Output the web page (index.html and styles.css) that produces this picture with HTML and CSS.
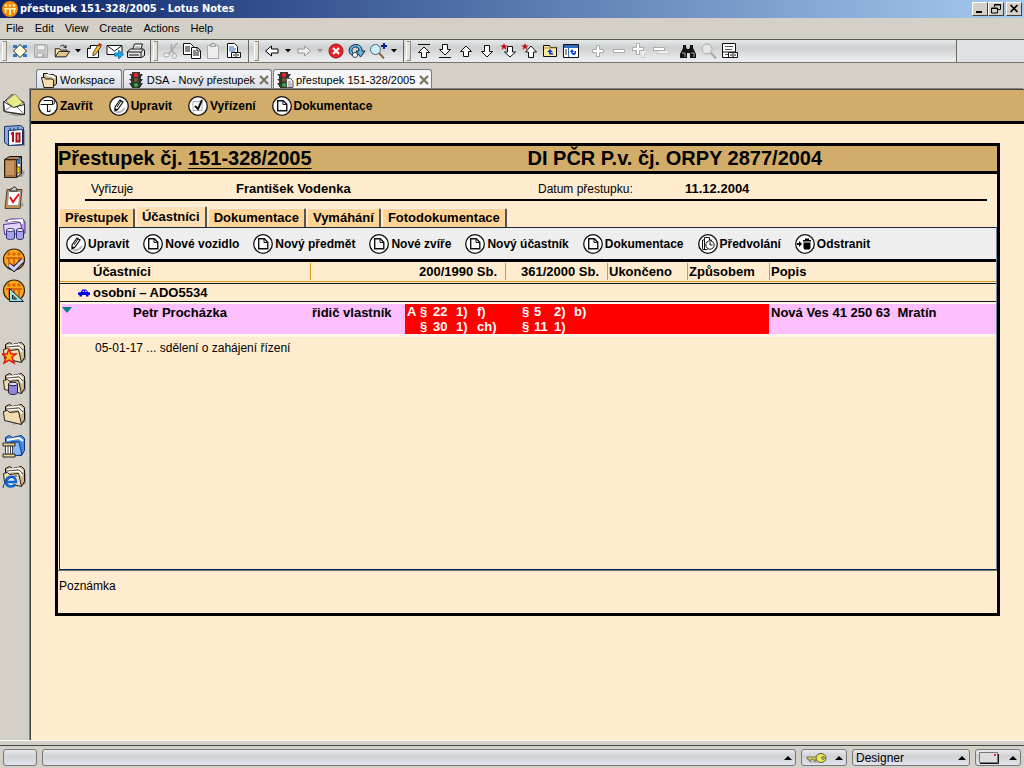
FILE: index.html
```html
<!DOCTYPE html>
<html lang="cs">
<head>
<meta charset="utf-8">
<title>přestupek 151-328/2005 - Lotus Notes</title>
<link rel="stylesheet" href="styles.css">
</head>
<body>
<svg class="sprite" aria-hidden="true">
  <defs>
    <symbol id="logo" viewBox="0 0 16 16"><circle cx="8" cy="8" r="8" fill="#f58a08"/><g fill="#fff0a0"><circle cx="4" cy="4.500" r="1.300"/><circle cx="8" cy="4.500" r="1.300"/><circle cx="12" cy="4.500" r="1.300"/><path d="M2 7h12v1.500h-1V12h-1.500V8.500H9V14H7V8.500H4.500V12H3V8.500H2z"/></g></symbol>
    <symbol id="diamond" viewBox="0 0 16 16"><path d="M1 2h4v3H1zM11 2h4v3h-4zM1 11h4v3H1zM11 11h4v3h-4z" fill="#2b7bd0"/><path d="M8 1.500l6.500 6.500L8 14.500 1.500 8z" fill="#fffbd8" stroke="#222"/></symbol>
    <symbol id="save" viewBox="0 0 16 16"><path d="M1.500 1.500h12l1 1v12h-13z" fill="#ccc" stroke="#aaa"/><path d="M4 2h8v5H4zM4 10h8v4H4z" fill="#eee" stroke="#aaa"/><path d="M9 11h2v3H9z" fill="#aaa"/></symbol>
    <symbol id="open" viewBox="0 0 20 16"><path d="M2.500 14V5.500h5l1 1.500h7v2" fill="#ffe9b0" stroke="#111"/><path d="M2.500 14.500l4-6h12l-4 6z" fill="#e3c58b" stroke="#111"/><path d="M8 3c2-2 5-2 6 1M11.500 3.500l3 1V1.500" fill="none" stroke="#111"/></symbol>
    <symbol id="caret" viewBox="0 0 8 8"><path d="M1 2h6L4 5.500z" fill="currentColor"/></symbol>
    <symbol id="edit" viewBox="0 0 16 16"><path d="M4.500 2.500h8v12h-11v-9z" fill="#fff" stroke="#111"/><path d="M1.500 5.500h3v-3" fill="#ddd" stroke="#111"/><path d="M7 10l5-8 3 1.500-5 7.500-3 2z" fill="#f3c61b" stroke="#222" stroke-width=".8"/><path d="M12 2l1-2 3 1.500-1 2z" fill="#d21"/></symbol>
    <symbol id="mail" viewBox="0 0 17 16"><path d="M.5 2.500h15v9H.5z" fill="#fff" stroke="#111"/><path d="M1 3l7 5 7-5" fill="none" stroke="#111"/><path d="M8 10h4V7l5 4.500L12 16v-3H8z" fill="#18a6e6" stroke="#0863a5" stroke-width=".7"/></symbol>
    <symbol id="print" viewBox="0 0 18 16"><path d="M5.500 7l2-6h8l-2 6" fill="#fff" stroke="#111"/><path d="M8 4h5" stroke="#777"/><path d="M.5 8.500l3-2.500h13l1 1.500v5l-3 2H.5z" fill="#e5e5e5" stroke="#111"/><path d="M.5 9h13l3-2M14 9v5M2 12h10" stroke="#111" fill="none"/></symbol>
    <symbol id="cut" viewBox="0 0 17 16"><path d="M15 0L6 11M9 1v6l4 5" stroke="#aaa" stroke-width="1.600" fill="none"/><ellipse cx="4" cy="12" rx="3" ry="2" fill="#eee" stroke="#aaa"/><ellipse cx="12" cy="13" rx="2" ry="2.500" fill="#eee" stroke="#aaa"/></symbol>
    <symbol id="copy" viewBox="0 0 18 16"><path d="M.5.5h7l3 3v8H.5z" fill="#fff" stroke="#111"/><path d="M2 4h5M2 6h5M2 8h5" stroke="#111"/><path d="M8.500 4.500h6l3 3v8h-9z" fill="#fff" stroke="#111"/><path d="M14 5v3h3M10 8h3M10 10h6M10 12h6" stroke="#111" fill="none"/></symbol>
    <symbol id="paste" viewBox="0 0 14 16"><path d="M1.500 2.500h11v13h-11z" fill="#eee" stroke="#aaa"/><path d="M4.500 3.500v-2h1v-1h3v1h1v2z" fill="#ddd" stroke="#999"/></symbol>
    <symbol id="doclink" viewBox="0 0 16 16"><path d="M1.500.5h7l3 3v11h-10z" fill="#fff" stroke="#111"/><path d="M3 4h5M3 6h7M3 8h6" stroke="#26b" /><path d="M5.500 9.500h9v5h-9z" fill="#fff" stroke="#111"/><path d="M7 12h6M10 9v2M10 13v2" stroke="#111"/></symbol>
    <symbol id="back" viewBox="0 0 16 16"><path d="M1.500 8l6-5v3h6.500v4H7.500v3z" fill="#fff" stroke="currentColor"/></symbol>
    <symbol id="fwd" viewBox="0 0 16 16"><path d="M14.500 8l-6-5v3H2v4h6.500v3z" fill="#eee" stroke="currentColor"/></symbol>
    <symbol id="stop" viewBox="0 0 16 16"><circle cx="8" cy="8" r="7" fill="#e5222a" stroke="#a30c12"/><path d="M5 5l6 6M11 5l-6 6" stroke="#fff" stroke-width="2.200"/></symbol>
    <symbol id="refresh" viewBox="0 0 18 16"><path d="M5 12.500C-1 11 0 2 7.500 1.500 12 1.500 14 4 14 8h3l-4.500 6L8 8h3c0-3-1.500-4-3.500-4C4 4 3 8 5 10z" fill="#62b8e8" stroke="#123"/><circle cx="7" cy="12" r="2.500" fill="#fff" stroke="#345"/></symbol>
    <symbol id="zoomplus" viewBox="0 0 18 16"><circle cx="6.500" cy="6.500" r="5" fill="#c9eef5" stroke="#567"/><path d="M10 10l5 5.500" stroke="#876737" stroke-width="2"/><path d="M12 3h6M15 0v6" stroke="#001a8c" stroke-width="1.800"/></symbol>
    <symbol id="up" viewBox="0 0 14 16"><path d="M7 3L1.500 8.500h3v5h5v-5h3z" fill="#fff" stroke="#111"/></symbol>
    <symbol id="down" viewBox="0 0 14 16"><path d="M7 14L1.500 8.500h3v-6h5v6h3z" fill="#fff" stroke="#111"/></symbol>
    <symbol id="top" viewBox="0 0 14 16"><path d="M1 1.500h12" stroke="#111"/><path d="M7 4L1.500 9.500h3v5h5v-5h3z" fill="#fff" stroke="#111"/></symbol>
    <symbol id="bottom" viewBox="0 0 14 16"><path d="M1 14.500h12" stroke="#111"/><path d="M7 12L1.500 6.500h3v-5h5v5h3z" fill="#fff" stroke="#111"/></symbol>
    <symbol id="stardown" viewBox="0 0 16 16"><path d="M10 14L4.500 9h3V3.500h5V9h3z" fill="#fff" stroke="#111"/><path d="M4 0l1 2.500h3L5.500 4l1 3L4 5 1.500 7l1-3L0 2.500h3z" fill="#c1080c"/></symbol>
    <symbol id="starup" viewBox="0 0 16 16"><path d="M10 3L4.500 9h3v5.500h5V9h3z" fill="#fff" stroke="#111"/><path d="M4 0l1 2.500h3L5.500 4l1 3L4 5 1.500 7l1-3L0 2.500h3z" fill="#c1080c"/></symbol>
    <symbol id="folderup" viewBox="0 0 16 16"><path d="M1.500 13.500v-11h6l1 2h6v9z" fill="#ffe9a3" stroke="#111"/><path d="M2 5h12" stroke="#b98d2a"/><path d="M8 6L5 9h2v2.500h4v-1.500H9V9h2z" fill="#0a3fd0"/></symbol>
    <symbol id="winup" viewBox="0 0 16 16"><path d="M.5 1.500h15v13H.5z" fill="#fff" stroke="#111"/><path d="M1 2h14v3H1z" fill="#2c6cb8"/><path d="M5.500 5v9" stroke="#2c6cb8"/><path d="M2 7h2M2 9h2M2 11h2" stroke="#333"/><path d="M9 6L7 9h1c0 3 5 5 5 0V8h-1.500v1c0 2-2 1-2 0H11z" fill="#0a3fd0"/></symbol>
    <symbol id="plus" viewBox="0 0 14 16"><path d="M5.500 2.500h3v4h4v3h-4v4h-3v-4h-4v-3h4z" fill="#fff" stroke="#aaa"/></symbol>
    <symbol id="minus" viewBox="0 0 14 16"><path d="M1.500 6.500h11v3h-11z" fill="#fff" stroke="#aaa"/></symbol>
    <symbol id="plusall" viewBox="0 0 16 16"><path d="M8 7.500h6.500v3h-2v4h-3v-3" fill="#eee" stroke="#ccc"/><path d="M4.500.5h3v4h4v3h-4v4h-3v-4h-4v-3h4z" fill="#fff" stroke="#aaa"/></symbol>
    <symbol id="minusall" viewBox="0 0 16 16"><path d="M4.500 7.500h11v3h-11z" fill="#eee" stroke="#ccc"/><path d="M.5 4.500h11v3H.5z" fill="#fff" stroke="#aaa"/></symbol>
    <symbol id="binoc" viewBox="0 0 16 16"><path d="M3 2h3v2l1 2h2l1-2V2h3v3l3 6v4h-6v-5H7v5H0v-4l3-6z" fill="#111"/><path d="M2 10h3v4M11 10h3v4" stroke="#aaa" fill="none"/></symbol>
    <symbol id="magn" viewBox="0 0 16 16"><circle cx="6" cy="6" r="5" fill="#e6e6e6" stroke="#aaa"/><path d="M10 10l5 5.500" stroke="#aaa" stroke-width="2"/></symbol>
    <symbol id="props" viewBox="0 0 16 16"><path d="M.5.5h13v14H.5z" fill="#fff" stroke="#111"/><path d="M3 3.500h8M3 6.500h7" stroke="#555"/><path d="M1 9h12" stroke="#111"/><path d="M3 11.500h3" stroke="#555"/><path d="M6.500 9.500h9v5h-9z" fill="#fff" stroke="#111"/><path d="M8 12h6M11 9v2M11 13v2" stroke="#111"/></symbol>
    <symbol id="folders" viewBox="0 0 16 16"><path d="M2.500 6V1.500h4l1 1h5l1 1.500h2v8l-3 2" fill="#c9b387" stroke="#111"/><path d="M5 3l6 1 3 2" stroke="#fff" stroke-width="2" fill="none"/><path d="M.5 5.500h3l1 1.500h6l2 1v7.500H3z" fill="#f6dfaa" stroke="#222"/></symbol>
    <symbol id="light" viewBox="0 0 14 16"><path d="M0 2h3v1h8V2h3l-2 3v2h2l-2 3v1h2l-2 3v1H2v-1l-2-3h2V9L0 7h2V4z" fill="#333"/><path d="M3 0h8v16H3z" fill="#333"/><circle cx="7" cy="3" r="2.200" fill="#e22"/><circle cx="7" cy="8" r="2" fill="#765c28"/><circle cx="7" cy="13" r="2" fill="#2bb14b"/></symbol>
    <symbol id="lightdoc" viewBox="0 0 17 16"><use href="#light" width="14" height="16"/><path d="M9.500 6.500h4l2.500 2.500v6.500H9.500z" fill="#f5f5f5" stroke="#555"/><path d="M11 10h3M11 12h4M11 14h4" stroke="#888"/></symbol>
    <symbol id="x" viewBox="0 0 10 10"><path d="M1 1l8 8M9 1l-8 8" stroke="#786f5e" stroke-width="2"/></symbol>

    <symbol id="ring" viewBox="0 0 20 20"><circle cx="10" cy="10" r="9.300" fill="#fff" stroke="#111" stroke-width="1.300"/></symbol>
    <symbol id="a-close" viewBox="0 0 20 20"><use href="#ring"/><path d="M5.500 4.500h9v4h-12M9.500 9v7M9.500 15.500h2.500v-2M14.500 8.500c2 0 2-2 1.500-4" fill="none" stroke="#111"/></symbol>
    <symbol id="a-edit" viewBox="0 0 20 20"><use href="#ring"/><path d="M7 16c3 1 7-1 9-4" stroke="#bbb" stroke-width="2" fill="none"/><path d="M6 11l5-7 3 2-5 7-3 2z" fill="#fff" stroke="#111" stroke-width="1.200"/><path d="M8 11l4-6" stroke="#111"/><path d="M6 12v3l3-1z"/></symbol>
    <symbol id="a-check" viewBox="0 0 20 20"><use href="#ring"/><path d="M5 5.500h9v9H5z" fill="#fff" stroke="#aaa"/><path d="M7 10l3 3 4-9" stroke="#111" stroke-width="2" fill="none"/></symbol>
    <symbol id="a-doc" viewBox="0 0 20 20"><use href="#ring"/><path d="M5.700 4.700h5.600l3.500 3.600v6.500H5.700z" fill="#fff" stroke="#111" stroke-width="1.400"/><path d="M11 5v3.500h3.500" fill="none" stroke="#111"/></symbol>
    <symbol id="a-clock" viewBox="0 0 20 20"><use href="#ring"/><path d="M4.500 15V6h2V3.500h5V6h2v2M6.500 6v10M4.500 15.500h5" fill="none" stroke="#111"/><circle cx="12" cy="11" r="4.200" fill="#fff" stroke="#111"/><path d="M12 8v3h2.500" fill="none" stroke="#111"/></symbol>
    <symbol id="a-del" viewBox="0 0 20 20"><use href="#ring"/><path d="M2 10h4" stroke="#111" stroke-width="2"/><path d="M4 7l3 3-3 3z"/><path d="M8 6h8v1.500H8zM10 4.500h4V6h-4zM8.500 8.500h7V14l-1 1.500h-5l-1-1.500z"/></symbol>

    <symbol id="s-mail" viewBox="0 0 24 24"><path d="M5 21l18-2v3l-8 1z" fill="#999"/><path d="M1.500 9.500L10 1.500l12 8v12l-20-3z" fill="#fff" stroke="#111"/><path d="M4 8l9-7 8 9-9 5z" fill="#eaea88" stroke="#886"/><path d="M1.500 8.500l10 6 11-3v10l-20-3z" fill="#fff" stroke="#222"/><path d="M2.500 18l7-5M22 21l-7-7" stroke="#777"/></symbol>
    <symbol id="s-cal" viewBox="0 0 24 24"><path d="M6 22h17V6h-2z" fill="#999"/><path d="M2.500 2.500l16-1 3 2v17l-15 1-4-3z" fill="#8fa8d6" stroke="#14366c"/><path d="M6.500 6.500l14-1v15l-14 1z" fill="#fff" stroke="#14366c"/><path d="M8 4v3M12 4v3M16 3v3" stroke="#14366c"/><path d="M9 10l2-1v9M14.500 9.500h3v8h-3z" fill="none" stroke="#a50f16" stroke-width="2"/></symbol>
    <symbol id="s-book" viewBox="0 0 24 24"><path d="M8 22h12l3-5-4-3z" fill="#999"/><path d="M2.500 4.500l5-3h12v17l-5 4h-12z" fill="#b7824d" stroke="#111"/><path d="M15 5l4-3v17l-4 3z" fill="#fff" stroke="#111"/><path d="M16 3h2v6h-2z" fill="#27c"/><path d="M2.500 4.500h12v18h-12z" fill="#a8703c" stroke="#35200c"/><path d="M4 6h8v14H4z" fill="#c59462"/><path d="M15 12h3v6h-3z" fill="#f3cc18" stroke="#653"/></symbol>
    <symbol id="s-task" viewBox="0 0 24 24"><path d="M18 22l4-3-2-3z" fill="#999"/><path d="M5 3.500h15l-2 19H3z" fill="#c88e57" stroke="#543"/><path d="M6.500 5.500h12l-2 14h-11z" fill="#fff" stroke="#998"/><path d="M8 5V3h2l2-2.500L15 3v2z" fill="#ccc" stroke="#222"/><path d="M8 11l3 5 6-8" stroke="#df1718" stroke-width="2" fill="none"/></symbol>
    <symbol id="s-rep" viewBox="0 0 24 24"><path d="M3 4l6-2h12l2 3v11l-5 3" fill="#bca1e6" stroke="#52308e"/><path d="M6 4l14-1v4M2 8l18-3" stroke="#fff" stroke-width="2"/><path d="M1.500 7.500l17-2 2 11-18 1z" fill="#e4d5ff" stroke="#52308e"/><path d="M4.500 13v8c1 2 7 2 8 0v-8zM14.500 13v8c1 2 6 2 7 0v-8z" fill="#a6a4e8" stroke="#303070"/><ellipse cx="8.500" cy="13" rx="4" ry="1.500" fill="#fff" stroke="#303070"/><ellipse cx="18" cy="13" rx="3.500" ry="1.500" fill="#fff" stroke="#303070"/></symbol>
    <symbol id="s-orb" viewBox="0 0 24 24"><circle cx="12" cy="11.500" r="10.500" fill="#fca71c" stroke="#3a2608" stroke-width="1.200"/><g fill="#d9640c"><circle cx="7" cy="6" r="1.700"/><circle cx="12" cy="6" r="1.700"/><circle cx="17" cy="6" r="1.700"/><path d="M4 9h16v2h-2v7h-2v-7h-3v9h-2v-9H8v7H6v-7H4z"/></g></symbol>
    <symbol id="s-orbcheck" viewBox="0 0 24 24"><use href="#s-orb"/><path d="M7 17l5 4 9-9" stroke="#223" stroke-width="5" fill="none"/><path d="M7 17l5 4 9-9" stroke="#cfd3f5" stroke-width="3" fill="none"/></symbol>
    <symbol id="s-orbtri" viewBox="0 0 24 24"><use href="#s-orb"/><path d="M7.500 9.500l14 13h-14z" fill="#9be3d8" stroke="#124"/><path d="M10.500 16l4 4h-4z" fill="#e97b12" stroke="#124"/></symbol>
    <symbol id="s-folder" viewBox="0 0 24 24"><path d="M10 22l14-3V8z" fill="#999"/><path d="M3.500 8V3.500l4-2 3 2 9-2 3 3v12l-3 5" fill="#cdb98c" stroke="#111"/><path d="M5 5l12-2 4 4M5 7l12-1 3 5" stroke="#fff" stroke-width="1.600" fill="none"/><path d="M4 6l13-1 4 4" stroke="#333" stroke-width=".8" fill="none"/><path d="M1.500 8.500l4-1 2 2 9-1 3 13-17-4z" fill="#f2ddb0" stroke="#222"/></symbol>
    <symbol id="s-star" viewBox="0 0 24 24"><use href="#s-folder"/><path d="M7 8l2 5h5l-4 3 2 6-5-3-5 3 2-6-4-3h5z" fill="#fdb713" stroke="#e21b12" stroke-width="1.500"/></symbol>
    <symbol id="s-db" viewBox="0 0 24 24"><use href="#s-folder"/><path d="M6.500 12v9c2 2 7 2 9 0v-9z" fill="#8f85da" stroke="#223"/><ellipse cx="11" cy="12" rx="4.500" ry="1.800" fill="#dcd8ff" stroke="#223"/></symbol>
    <symbol id="s-lib" viewBox="0 0 24 24"><path d="M3.500 8V3.500l4-2 3 2 9-2 3 3v12l-3 5H9" fill="#4a8ae6" stroke="#08337e"/><path d="M5 6l12-2 4 3" stroke="#fff" stroke-width="2" fill="none"/><path d="M9 8h8l3 13-10 1z" fill="#83b8fa" stroke="#08337e"/><path d="M1 9h12v3H1zM1 20h12v3H1z" fill="#f0dc91" stroke="#222"/><path d="M3.500 12h7v8h-7zM6 12v8M8.500 12v8" fill="#fff" stroke="#444"/></symbol>
    <symbol id="s-ie" viewBox="0 0 24 24"><use href="#s-folder"/><path d="M4 17h10c0-7-10-7-10 0 0 5 7 6 9 2" fill="#d8ecff" stroke="#1267ce" stroke-width="2.600"/><path d="M1 23c0-5 8-13 14-12" stroke="#0a3d98" fill="none"/></symbol>
    <symbol id="car" viewBox="0 0 12 8"><path d="M0 3.500L3 3l1-2.500h4L10 3l2 .5V6h-1.500v1.500H8V6H4v1.500H1.500V6H0z" fill="#0000e8"/><path d="M4.500 3l.5-1.500h1V3M7 1.500h.8L9 3H7z" fill="#bcd"/></symbol>
    <symbol id="key" viewBox="0 0 22 12"><path d="M2 5h12v2h-3v2H9V7H6v2H4V7H2z" fill="#e8e05a" stroke="#554" stroke-width=".8"/><ellipse cx="16" cy="6" rx="5" ry="4.500" fill="#f1e74f" stroke="#554"/><circle cx="18" cy="6" r="1.300" fill="#fff" stroke="#554"/><path d="M4 10h11" stroke="#999"/></symbol>
    <symbol id="env" viewBox="0 0 20 12"><path d="M.5.5h18v10H.5z" fill="#ddd" stroke="#777"/><path d="M1 11.500h18.500V2" stroke="#111" fill="none"/><path d="M15 2h2v2h-2z" fill="#f16"/></symbol>
    <symbol id="tri" viewBox="0 0 8 8"><path d="M0 6l4-4 4 4z"/></symbol>
  </defs>
</svg>

<header class="titlebar">
  <svg class="ic16"><use href="#logo"/></svg>
  <h1 class="titlebar-text">přestupek 151-328/2005 - Lotus Notes</h1>
  <div class="win-buttons">
    <button class="win-btn" aria-label="Minimize"><svg viewBox="0 0 12 10"><path d="M2 7h6v2H2z"/></svg></button>
    <button class="win-btn" aria-label="Restore"><svg viewBox="0 0 12 10"><path d="M4.500 3V.5h6v5H8M4 1h7M1.500 4h6v5h-6zM1 4.500h7" fill="none" stroke="#000"/></svg></button>
    <button class="win-btn win-close" aria-label="Close"><svg viewBox="0 0 12 10"><path d="M2.500 1l7 7M9.500 1l-7 7" stroke="#000" stroke-width="1.700"/></svg></button>
  </div>
</header>

<nav class="menubar">
  <button>File</button><button>Edit</button><button>View</button><button>Create</button><button>Actions</button><button>Help</button>
</nav>

<div class="toolbar">
  <div class="tool-group">
    <button class="tool" aria-label="Properties"><svg><use href="#diamond"/></svg></button>
    <button class="tool" aria-label="Save"><svg><use href="#save"/></svg></button>
    <button class="tool" aria-label="Open"><svg class="wide"><use href="#open"/></svg></button>
    <button class="tool caret" aria-label="Open menu"><svg><use href="#caret"/></svg></button>
    <button class="tool" aria-label="Edit document"><svg><use href="#edit"/></svg></button>
    <button class="tool" aria-label="Send"><svg class="wide"><use href="#mail"/></svg></button>
    <button class="tool" aria-label="Print"><svg class="wide"><use href="#print"/></svg></button>
  </div>
  <div class="tool-group">
    <button class="tool" aria-label="Cut"><svg class="wide"><use href="#cut"/></svg></button>
    <button class="tool" aria-label="Copy"><svg class="wide"><use href="#copy"/></svg></button>
    <button class="tool" aria-label="Paste"><svg><use href="#paste"/></svg></button>
    <button class="tool" aria-label="Copy as link"><svg><use href="#doclink"/></svg></button>
  </div>
  <div class="tool-group spaced">
    <button class="tool" aria-label="Back"><svg><use href="#back"/></svg></button>
    <button class="tool caret" aria-label="Back list"><svg><use href="#caret"/></svg></button>
    <button class="tool dim" aria-label="Forward"><svg><use href="#fwd"/></svg></button>
    <button class="tool caret dim" aria-label="Forward list"><svg><use href="#caret"/></svg></button>
    <button class="tool" aria-label="Stop"><svg><use href="#stop"/></svg></button>
    <button class="tool" aria-label="Refresh"><svg class="wide"><use href="#refresh"/></svg></button>
    <button class="tool" aria-label="Search"><svg class="wide"><use href="#zoomplus"/></svg></button>
    <button class="tool caret" aria-label="Search menu"><svg><use href="#caret"/></svg></button>
  </div>
  <div class="tool-group grow">
    <button class="tool" aria-label="First"><svg><use href="#top"/></svg></button>
    <button class="tool" aria-label="Last"><svg><use href="#bottom"/></svg></button>
    <button class="tool" aria-label="Previous"><svg><use href="#up"/></svg></button>
    <button class="tool" aria-label="Next"><svg><use href="#down"/></svg></button>
    <button class="tool" aria-label="Next unread"><svg><use href="#stardown"/></svg></button>
    <button class="tool" aria-label="Previous unread"><svg><use href="#starup"/></svg></button>
    <button class="tool" aria-label="Parent folder"><svg><use href="#folderup"/></svg></button>
    <button class="tool" aria-label="Parent view"><svg><use href="#winup"/></svg></button>
    <button class="tool lead" aria-label="Expand"><svg><use href="#plus"/></svg></button>
    <button class="tool" aria-label="Collapse"><svg><use href="#minus"/></svg></button>
    <button class="tool" aria-label="Expand all"><svg><use href="#plusall"/></svg></button>
    <button class="tool" aria-label="Collapse all"><svg><use href="#minusall"/></svg></button>
    <button class="tool lead" aria-label="Find"><svg><use href="#binoc"/></svg></button>
    <button class="tool" aria-label="Find next"><svg><use href="#magn"/></svg></button>
    <button class="tool" aria-label="Field properties"><svg><use href="#props"/></svg></button>
  </div>
  <div class="tool-rest"></div>
</div>

<div class="window-tabs">
  <div class="wtab"><svg class="ic16"><use href="#folders"/></svg><span>Workspace</span></div>
  <div class="wtab closable"><svg class="ic16"><use href="#light"/></svg><span>DSA - Nový přestupek</span><button class="tab-close" aria-label="Close tab"><svg><use href="#x"/></svg></button></div>
  <div class="wtab closable current"><svg class="ic16"><use href="#lightdoc"/></svg><span>přestupek 151-328/2005</span><button class="tab-close" aria-label="Close tab"><svg><use href="#x"/></svg></button></div>
</div>

<div class="workarea">
  <nav class="bookmarks">
    <button aria-label="Mail"><svg><use href="#s-mail"/></svg></button>
    <button aria-label="Calendar"><svg><use href="#s-cal"/></svg></button>
    <button aria-label="Address book"><svg><use href="#s-book"/></svg></button>
    <button aria-label="To do"><svg><use href="#s-task"/></svg></button>
    <button aria-label="Replication"><svg><use href="#s-rep"/></svg></button>
    <button aria-label="Administrator"><svg><use href="#s-orbcheck"/></svg></button>
    <button aria-label="Designer"><svg><use href="#s-orbtri"/></svg></button>
    <button class="second" aria-label="Favorites"><svg><use href="#s-star"/></svg></button>
    <button aria-label="Databases"><svg><use href="#s-db"/></svg></button>
    <button aria-label="More bookmarks"><svg><use href="#s-folder"/></svg></button>
    <button aria-label="History"><svg><use href="#s-lib"/></svg></button>
    <button aria-label="Internet"><svg><use href="#s-ie"/></svg></button>
  </nav>

  <main class="document">
    <div class="actions page-actions">
      <button class="action"><svg><use href="#a-close"/></svg>Zavřít</button>
      <button class="action"><svg><use href="#a-edit"/></svg>Upravit</button>
      <button class="action"><svg><use href="#a-check"/></svg>Vyřízení</button>
      <button class="action"><svg><use href="#a-doc"/></svg>Dokumentace</button>
    </div>

    <section class="form">
      <div class="form-title">
        <h2>Přestupek čj. <u>151-328/2005</u></h2>
        <h2>DI PČR P.v. čj. ORPY 2877/2004</h2>
      </div>
      <dl class="facts">
        <dt>Vyřizuje</dt><dd>František Vodenka</dd>
        <dt>Datum přestupku:</dt><dd>11.12.2004</dd>
      </dl>
      <div class="form-tabs" role="tablist">
        <button role="tab">Přestupek</button>
        <button role="tab" aria-selected="true" class="current">Účastníci</button>
        <button role="tab">Dokumentace</button>
        <button role="tab">Vymáhání</button>
        <button role="tab">Fotodokumentace</button>
      </div>
      <div class="panel">
        <div class="actions panel-actions">
          <button class="action"><svg><use href="#a-edit"/></svg>Upravit</button>
          <button class="action"><svg><use href="#a-doc"/></svg>Nové vozidlo</button>
          <button class="action"><svg><use href="#a-doc"/></svg>Nový předmět</button>
          <button class="action"><svg><use href="#a-doc"/></svg>Nové zvíře</button>
          <button class="action"><svg><use href="#a-doc"/></svg>Nový účastník</button>
          <button class="action"><svg><use href="#a-doc"/></svg>Dokumentace</button>
          <button class="action"><svg><use href="#a-clock"/></svg>Předvolání</button>
          <button class="action"><svg><use href="#a-del"/></svg>Odstranit</button>
        </div>
        <table class="people">
          <colgroup><col class="c-name"><col class="c-role"><col class="c-law1"><col class="c-law2"><col class="c-end"><col class="c-way"><col></colgroup>
          <thead>
            <tr>
              <th class="first"><span>Účastníci</span></th>
              <th class="num" colspan="2"><span>200/1990 Sb.</span></th>
              <th class="num"><span>361/2000 Sb.</span></th>
              <th><span>Ukončeno</span></th>
              <th><span>Způsobem</span></th>
              <th><span>Popis</span></th>
            </tr>
          </thead>
          <tbody>
            <tr class="category"><td colspan="7"><div class="category-cell"><svg class="car"><use href="#car"/></svg>osobní – ADO5534</div></td></tr>
            <tr class="person">
              <td><div class="person-name"><svg class="twisty" viewBox="0 0 10 6"><path d="M0 0h10L5 6z" fill="#008080"/></svg>Petr Procházka</div></td>
              <td class="role">řidič vlastník</td>
              <td class="alert"><div class="laws"><span>A</span><span>§</span><span>22</span><span>1)</span><span>f)</span><span></span><span>§</span><span>30</span><span>1)</span><span>ch)</span></div></td>
              <td class="alert"><div class="laws second-law"><span>§</span><span>5</span><span>2)</span><span>b)</span><span>§</span><span>11</span><span>1)</span><span></span></div></td>
              <td class="alert"></td>
              <td class="alert"></td>
              <td class="address">Nová Ves 41 250 63  Mratín</td>
            </tr>
            <tr class="entry"><td colspan="7">05-01-17 ... sdělení o zahájení řízení</td></tr>
          </tbody>
        </table>
      </div>
      <p class="note">Poznámka</p>
    </section>
  </main>
</div>

<footer class="statusbar">
  <div class="cell tiny"></div>
  <div class="cell message"><button aria-label="Messages"><svg><use href="#tri"/></svg></button></div>
  <div class="cell access"><svg class="key"><use href="#key"/></svg><button aria-label="Access"><svg><use href="#tri"/></svg></button></div>
  <div class="cell location"><span>Designer</span><button aria-label="Location"><svg><use href="#tri"/></svg></button></div>
  <div class="cell mailcell"><svg class="env"><use href="#env"/></svg><button aria-label="Mail menu"><svg><use href="#tri"/></svg></button></div>
</footer>
</body>
</html>
```
FILE: styles.css
```css
* { box-sizing: border-box; }

body {
  margin: 0;
  min-height: 100vh;
  display: flex;
  flex-direction: column;
  background: #d4d0c8;
  color: #000;
  font: 11px/14px "Liberation Sans", Arial, sans-serif;
}

button {
  margin: 0;
  padding: 0;
  border: 0;
  background: none;
  color: inherit;
  font: inherit;
}

svg { display: block; }
.sprite { position: absolute; width: 0; height: 0; }
.ic16 { width: 16px; height: 16px; flex: none; }

/* Title bar */
.titlebar {
  display: flex;
  align-items: center;
  gap: 2px;
  height: 18px;
  padding: 0 2px;
  background: linear-gradient(90deg, #0a246a, #a6caf0);
  color: #fff;
}
.titlebar-text {
  margin: 0;
  font: bold 11px/16px "DejaVu Sans Condensed", "DejaVu Sans", sans-serif;
}
.win-buttons { display: flex; margin-left: auto; }
.win-btn {
  width: 16px;
  height: 14px;
  padding: 1px;
  background: #d4d0c8;
  border: 1px solid;
  border-color: #fff #404040 #404040 #fff;
}
.win-btn svg { width: 12px; height: 10px; }
.win-close { margin-left: 2px; }

/* Menu */
.menubar {
  display: flex;
  gap: 11px;
  align-items: center;
  height: 21px;
  padding: 0 6px 2px;
}

/* Toolbar */
.toolbar {
  display: flex;
  height: 24px;
  border-top: 1px solid #55554d;
  border-bottom: 1px solid #77756a;
  background: linear-gradient(#e6eaea, #cdcfd1 35%, #e9ebec 90%);
}
.tool-group {
  display: flex;
  align-items: center;
  padding: 0 4px 0 2px;
  border-right: 1px solid #6b695f;
}
.tool-group::before {
  content: "";
  width: 3px;
  height: 18px;
  margin-right: 2px;
  border: 1px solid #8f8c82;
  border-left-color: #fff;
  background: #e4e0d8;
}
.tool-group.spaced { padding-left: 5px; }
.tool-group.grow { flex: 0 0 553px; }
.tool-rest { flex: 1; background: #dfe1e2; }
.tool {
  display: flex;
  align-items: center;
  justify-content: center;
  width: 21px;
  height: 20px;
  flex: none;
}
.tool svg { width: 16px; height: 16px; }
.tool svg.wide { width: 18px; }
.tool.caret { width: 11px; }
.tool.caret svg { width: 8px; height: 8px; }
.tool.dim { color: #999; }
.tool.lead { margin-left: 6px; }

/* Window tabs */
.window-tabs {
  display: flex;
  align-items: flex-end;
  gap: 1px;
  height: 26px;
  padding-left: 36px;
}
.wtab {
  display: flex;
  align-items: center;
  gap: 3px;
  height: 20px;
  padding: 1px 6px 0 4px;
  border: 1px solid #777b84;
  border-bottom: 0;
  border-radius: 3px 3px 0 0;
  background: linear-gradient(#f4f5f8, #d9dde4);
}
.wtab.closable { padding-right: 2px; }
.wtab.current { background: #f7f7f7; }
.wtab.current .ic16 { width: 17px; }
.wtab.current { gap: 2px; padding-left: 3px; }
.tab-close svg { width: 10px; height: 10px; margin-left: 1px; }
.wtab.current .tab-close svg { margin-left: 2px; }

/* Work area */
.workarea { flex: 1; display: flex; }
.bookmarks {
  display: flex;
  flex-direction: column;
  gap: 7px;
  flex: none;
  width: 30px;
  padding: 4px 2px;
}
.bookmarks button, .bookmarks svg { width: 24px; height: 24px; }
.bookmarks .second { margin-top: 31px; }

.document {
  flex: 1;
  min-width: 0;
  border: solid #404644;
  border-width: 1px 0 0 1px;
  background: #ffeccf;
  box-shadow: -1px -1px #85837c;
}

.actions { display: flex; align-items: center; gap: 14px; }
.action {
  display: flex;
  align-items: center;
  gap: 2px;
  font-weight: bold;
  font-size: 12px;
  white-space: nowrap;
}
.action svg { width: 20px; height: 20px; }
.page-actions {
  height: 34px;
  padding: 0 7px;
  gap: 16px;
  background: #d1ad69;
  border-bottom: 3px solid #000;
}

/* Form */
.form {
  margin: 19px 24px 0;
  border: 3px solid #000;
  font-size: 13px;
}
.form-title {
  display: grid;
  grid-template-columns: 1fr 1fr;
  height: 28px;
  background: #d1ad69;
  border-bottom: 3px solid #000;
}
.form-title h2 { margin: 0; font: bold 20px/25px "Liberation Sans", Arial, sans-serif; white-space: nowrap; }
.form-title u { text-decoration-thickness: 1px; text-underline-offset: 3px; }

.facts {
  display: grid;
  grid-template-columns: 145px 302px 147px 1fr;
  align-items: center;
  height: 27px;
  margin: 0 10px 5px 27px;
  padding: 4px 0 0 6px;
  border-bottom: 2px solid #000;
}
.facts dt { font-size: 12px; }
.facts dd { margin: 0; font-weight: bold; }

.form-tabs { display: flex; align-items: flex-end; gap: 2px; padding-left: 2px; height: 21px; }
.form-tabs button {
  height: 19px;
  padding: 0 5px 1px;
  border: solid;
  border-width: 1px 2px 0 0;
  border-color: #eee #555 #555 #eee;
  border-radius: 2px 2px 0 0;
  background: #ffd597;
  font-weight: bold;
}
.form-tabs .current { height: 21px; background: #ffe0b2; }

.panel {
  min-height: 343px;
  margin: 0 0 0 1px;
  border: 1px solid #1c2733;
  border-bottom-color: #002060;
  border-right-color: #7483a0;
}
.panel-actions {
  height: 34px;
  padding: 0 6px;
  background: #eee;
  border-bottom: 3px solid #000;
}

.people { width: 100%; table-layout: fixed; border-collapse: separate; border-spacing: 0; }
.c-name { width: 250px; }
.c-role { width: 95px; }
.c-law1 { width: 100px; }
.c-law2 { width: 102px; }
.c-end { width: 80px; }
.c-way { width: 82px; }
.people th, .people td { padding: 0; text-align: left; vertical-align: top; white-space: pre; }
.people th { height: 20px; border-bottom: 1px solid #dc9e14; }
.people th span { display: block; height: 17px; margin-top: 1px; padding: 2px 0 0 1px; border-left: 1px solid #dc9e14; }
.people .first span { padding-left: 33px; border: 0; }
.people .num span { padding-right: 8px; text-align: right; }
.people .category td { padding-top: 1px; font-weight: bold; }
.category-cell {
  display: flex;
  align-items: center;
  gap: 3px;
  height: 19px;
  padding-left: 18px;
  border: solid #101820;
  border-width: 1px 0;
}
.car { width: 12px; height: 8px; }
.person { font-weight: bold; line-height: 15px; }
.person td {
  background: #fdbffd;
  border: solid #fff6e6;
  border-width: 2px 0 3px;
}
.person td:first-child { border-left: 2px solid #ffeccf; }
.person-name { display: flex; gap: 61px; height: 30px; padding-top: 1px; }
.twisty { width: 10px; height: 6px; margin-top: 2px; }
.people .alert { background: #f00; color: #fff; }
.people .person td { background-clip: padding-box; padding-top: 1px; }
.people .person td:first-child, .people .person td.alert { padding-top: 0; }
.people .person .role { padding-left: 2px; }
.people .person .address { padding-left: 2px; }
.laws { display: grid; grid-template-columns: 13px 13px 23px 21px auto; padding-left: 2px; }
.second-law { grid-template-columns: 12px 20px 20px auto; padding-left: 17px; }
.people .entry td { padding: 4px 0 0 35px; font-size: 12px; }

.note {
  margin: 0;
  padding: 8px 0 19px 1px;
  border-top: 1px solid #77756a;
  font-size: 12px;
  line-height: 15px;
}

/* Status bar */
.statusbar {
  display: flex;
  gap: 5px;
  height: 23px;
  padding: 3px 3px 2px;
  border-top: 1px solid #404644;
  background: #d4d0c8;
  box-shadow: 0 -4px #d4d0c8, 0 -5px #fff;
}
.cell {
  display: flex;
  align-items: center;
  justify-content: space-between;
  padding: 0 3px;
  border: 1px solid #77787a;
  border-radius: 3px;
  background: linear-gradient(#e9eaec, #cfd1d3 40%, #e2e3ee);
}
.cell button svg { width: 8px; height: 8px; }
.tiny { width: 34px; }
.message { flex: 1; justify-content: flex-end; }
.access { width: 46px; }
.location { width: 118px; font-size: 12px; }
.mailcell { width: 46px; }
.key { width: 22px; height: 12px; }
.env { width: 20px; height: 12px; }
```
